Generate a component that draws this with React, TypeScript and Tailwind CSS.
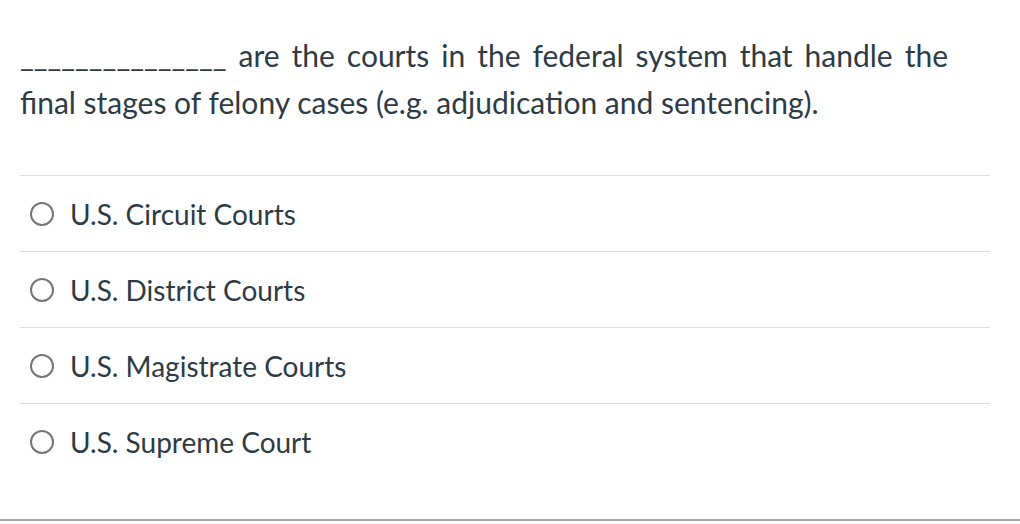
const answers = [
  "U.S. Circuit Courts",
  "U.S. District Courts",
  "U.S. Magistrate Courts",
  "U.S. Supreme Court",
];

export default function App() {
  return (
    <div
      className="w-[1020px] h-[524px] overflow-hidden bg-white text-[#2d3b45]"
      style={{ fontFamily: "Lato, 'Open Sans', sans-serif" }}
    >
      <div className="px-[20px] pt-[32px]">
        <p className="w-[928px] text-justify text-[30px] leading-[47px]">
          _______________ are the courts in the federal system that handle the final stages of felony cases (e.g. adjudication and sentencing).
        </p>
      </div>
      <div className="mt-[49px] mx-[20px] w-[970px]">
        {answers.map((a) => (
          <div key={a} className="flex h-[76px] items-center border-t border-[#dcdcdc]">
            <span className="ml-[10px] box-border h-[24px] w-[24px] shrink-0 rounded-full border-2 border-[#767676]" />
            <span className="ml-[16px] text-[28px]">{a}</span>
          </div>
        ))}
      </div>
      <div className="mt-[40px] h-[2px] w-full bg-[#a6a6a6]" />
    </div>
  );
}
